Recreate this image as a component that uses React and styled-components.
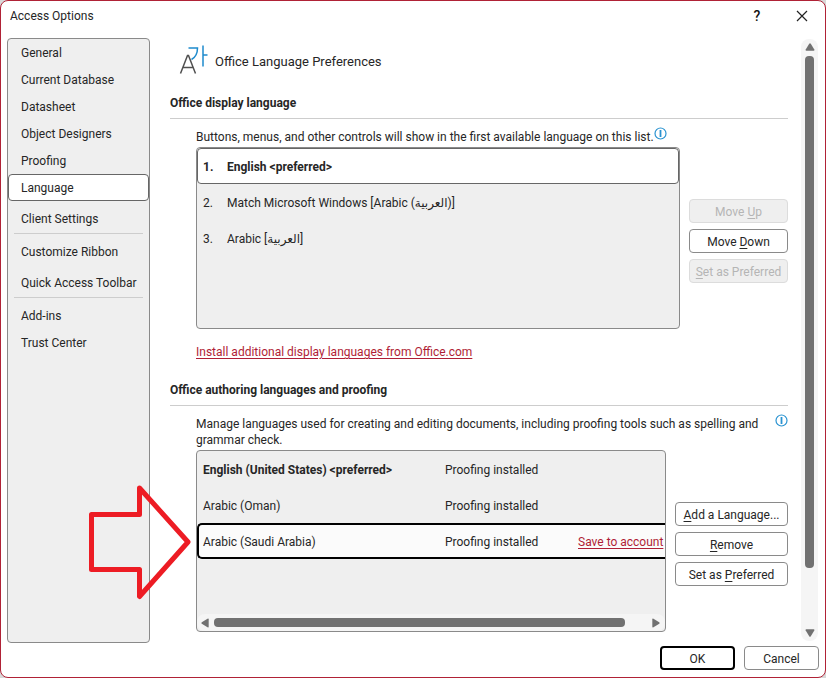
import React, { useState } from "react";

import styled, { createGlobalStyle, css } from "styled-components";

const GlobalStyle = createGlobalStyle`
  * {
    box-sizing: border-box;
  }
  body {
    margin: 0;
    background: #d8d8d8;
    color: #262626;
    font-family: Roboto, "DejaVu Sans", sans-serif;
    font-size: 12px;
    line-height: 16px;
  }
`;

const pages = [
  { name: "General" },
  { name: "Current Database" },
  { name: "Datasheet" },
  { name: "Object Designers" },
  { name: "Proofing" },
  { name: "Language" },
  { name: "Client Settings", spaced: true, divider: true },
  { name: "Customize Ribbon" },
  { name: "Quick Access Toolbar", spaced: true, divider: true },
  { name: "Add-ins" },
  { name: "Trust Center" },
];

const displayLanguages = [
  "English <preferred>",
  "Match Microsoft Windows [Arabic (العربية)]",
  "Arabic [العربية]",
];

const authoringLanguages = [
  { name: "English (United States) <preferred>", preferred: true },
  { name: "Arabic (Oman)" },
  { name: "Arabic (Saudi Arabia)", save: true },
];

const LanguageIcon = () => (
  <svg width='30' height='30' viewBox='0 0 30 30' fill='none' aria-hidden='true'>
    <path
      d='M1.5 28.5L8.5 10.5H9.5L16.5 28.5M4 22.5H14'
      stroke='#505050'
      strokeWidth='1.5'
    />
    <path
      d='M9.5 3H18.5C18.5 8 17 12 12.5 14.5M24 .5V21.5M24 10H28.5'
      stroke='#1e8bcd'
      strokeWidth='1.5'
    />
  </svg>
);

const InfoIcon = () => (
  <svg width='13' height='13' viewBox='0 0 13 13' fill='none'>
    <circle cx='6.5' cy='6.5' r='5.5' stroke='#2a93d1' strokeWidth='1.2' />
    <path d='M6.5 3V10' stroke='#2a93d1' strokeWidth='1.8' />
  </svg>
);

const Triangle = ({ turn = 0 }) => (
  <svg width='10' height='10' viewBox='0 0 10 10' aria-hidden='true'>
    <path
      d='M4.2 1.8L.7 7.5Q.2 8.7 1.4 8.7H8.6Q9.8 8.7 9.3 7.5L5.8 1.8Q5 .8 4.2 1.8Z'
      fill='#717171'
      transform={`rotate(${turn} 5 5)`}
    />
  </svg>
);

const App = () => {
  const [page, setPage] = useState("Language");
  const [display, setDisplay] = useState(0);
  const [authoring, setAuthoring] = useState(2);

  return (
    <>
      <GlobalStyle />
      <Dialog>
        <TitleBar>
          <Title>Access Options</Title>
          <TitleButton aria-label='Help'>?</TitleButton>
          <TitleButton aria-label='Close'>
            <svg width='12' height='12' viewBox='0 0 12 12' aria-hidden='true'>
              <path d='M1 1L11 11M11 1L1 11' stroke='#222' strokeWidth='1.2' />
            </svg>
          </TitleButton>
        </TitleBar>

        <Body>
          <Sidebar>
            {pages.map(p => (
              <React.Fragment key={p.name}>
                <NavButton
                  $active={p.name === page}
                  $spaced={p.spaced}
                  onClick={() => setPage(p.name)}
                >
                  {p.name}
                </NavButton>
                {p.divider && <Divider />}
              </React.Fragment>
            ))}
          </Sidebar>

          <Content>
            <PageHeader>
              <LanguageIcon />
              <PageTitle>Office Language Preferences</PageTitle>
            </PageHeader>

            <SectionTitle>Office display language</SectionTitle>
            <Section>
              <Hint>
                <HintText>
                  Buttons, menus, and other controls will show in the first
                  available language on this list.
                </HintText>
                <InfoButton aria-label='About display languages'>
                  <InfoIcon />
                </InfoButton>
              </Hint>
              <Columns>
                <DisplayList>
                  {displayLanguages.map((name, i) => (
                    <li key={name}>
                      <DisplayRow
                        $active={i === display}
                        $preferred={i === 0}
                        onClick={() => setDisplay(i)}
                      >
                        <span>{i + 1}.</span>
                        <span>{name}</span>
                      </DisplayRow>
                    </li>
                  ))}
                </DisplayList>
                <Actions $width='99px'>
                  <Button disabled>
                    Move <u>U</u>p
                  </Button>
                  <Button>
                    Move <u>D</u>own
                  </Button>
                  <Button disabled>
                    <u>S</u>et as Preferred
                  </Button>
                </Actions>
              </Columns>
              <InstallLink href='#install'>
                Install additional display languages from Office.com
              </InstallLink>
            </Section>

            <SectionTitle>Office authoring languages and proofing</SectionTitle>
            <Section>
              <Hint $spread>
                <HintText>
                  Manage languages used for creating and editing documents,
                  including proofing tools such as spelling and grammar check.
                </HintText>
                <InfoButton aria-label='About authoring languages'>
                  <InfoIcon />
                </InfoButton>
              </Hint>
              <Columns>
                <AuthoringBox>
                  <Table>
                    <tbody>
                      {authoringLanguages.map((lang, i) => (
                        <Row
                          key={lang.name}
                          $active={i === authoring}
                          onClick={() => setAuthoring(i)}
                        >
                          <Cell $width='242px' $bold={lang.preferred}>
                            {lang.name}
                          </Cell>
                          <Cell $width='133px'>Proofing installed</Cell>
                          <Cell $width='150px'>
                            {lang.save && <Link href='#save'>Save to account</Link>}
                          </Cell>
                        </Row>
                      ))}
                    </tbody>
                  </Table>
                  <HorizontalBar>
                    <Triangle turn={-90} />
                    <HorizontalThumb />
                    <Triangle turn={90} />
                  </HorizontalBar>
                </AuthoringBox>
                <Actions $width='113px'>
                  <Button>
                    <u>A</u>dd a Language...
                  </Button>
                  <Button>
                    <u>R</u>emove
                  </Button>
                  <Button>
                    Set as <u>P</u>referred
                  </Button>
                </Actions>
              </Columns>
            </Section>
          </Content>

          <VerticalBar>
            <Triangle />
            <VerticalThumb />
            <Triangle turn={180} />
          </VerticalBar>
        </Body>

        <Footer>
          <Button $primary>OK</Button>
          <Button>Cancel</Button>
        </Footer>

        <Pointer width='104' height='116' viewBox='0 0 104 116' aria-hidden='true'>
          <path
            d='M3.5 30.5H51.5V4L100 58L51.5 112.5V85.5H3.5Z'
            fill='none'
            stroke='#ed1c24'
            strokeWidth='5'
            strokeLinejoin='round'
          />
        </Pointer>
      </Dialog>
    </>
  );
};

export default App;

const Dialog = styled.div`
  position: relative;
  display: flex;
  flex-direction: column;
  min-height: 100vh;
  background: #fff;
  border: 1px solid #b02236;
  border-radius: 8px;
`;

const TitleBar = styled.header`
  display: flex;
  align-items: center;
  height: 37px;
  padding: 0 8px 8px 9px;
`;

const Title = styled.h1`
  flex: 1;
  margin: 0;
  font-size: 12px;
  font-weight: normal;
`;

const TitleButton = styled.button`
  display: flex;
  justify-content: center;
  align-items: center;
  width: 30px;
  height: 24px;
  padding: 0;
  margin-left: 15px;
  background: none;
  border: none;
  color: #111;
  font-family: inherit;
  font-size: 14px;
  font-weight: 500;
`;

const Body = styled.div`
  display: flex;
  flex: 1;
  padding: 0 7px 0 6px;
`;

const Sidebar = styled.nav`
  display: flex;
  flex-direction: column;
  flex: 0 0 143px;
  background: #efefef;
  border: 1px solid #8a8a8a;
  border-radius: 4px;
`;

const NavButton = styled.button`
  height: 27px;
  margin-top: ${({ $spaced }) => ($spaced ? "4px" : "0")};
  padding: 0 0 0 12px;
  background: ${({ $active }) => ($active ? "#fff" : "transparent")};
  border: 1px solid ${({ $active }) => ($active ? "#666" : "transparent")};
  border-radius: 4px;
  color: inherit;
  font: inherit;
  text-align: left;
  white-space: nowrap;
`;

const Divider = styled.hr`
  align-self: stretch;
  height: 1px;
  margin: 1px 6px 4px;
  background: #cdcdcd;
  border: none;
`;

const Content = styled.main`
  flex: 1;
  min-width: 0;
  padding: 7px 13px 10px 20px;
`;

const PageHeader = styled.div`
  display: flex;
  align-items: center;
  gap: 6px;
  padding-left: 9px;
`;

const PageTitle = styled.h2`
  margin: 0;
  padding-top: 3px;
  font-size: 13px;
  font-weight: normal;
`;

const SectionTitle = styled.h3`
  margin: 20px 0 0;
  padding-bottom: 7px;
  border-bottom: 1px solid #cdcdcd;
  font-size: 12px;
  font-weight: bold;
`;

const Section = styled.section`
  padding: 8px 0 0 26px;
`;

const Hint = styled.div`
  display: flex;
  justify-content: ${({ $spread }) => ($spread ? "space-between" : "flex-start")};
  align-items: flex-start;
  margin-bottom: 2px;
`;

const HintText = styled.p`
  margin: 2px 0 0;
`;

const InfoButton = styled.button`
  display: flex;
  padding: 0;
  background: none;
  border: none;
`;

const Columns = styled.div`
  display: flex;
  align-items: flex-end;
  gap: 9px;
`;

const listBox = css`
  flex: 1;
  min-width: 0;
  min-height: 182px;
  background: #efefef;
  border: 1px solid #8a8a8a;
  border-radius: 4px;
  overflow: hidden;
`;

const DisplayList = styled.ol`
  ${listBox}
  margin: 0;
  padding: 0;
  list-style: none;
`;

const DisplayRow = styled.button`
  display: grid;
  grid-template-columns: 24px 1fr;
  align-items: center;
  width: 100%;
  height: 36px;
  padding: 2px 5px 0;
  background: ${({ $active }) => ($active ? "#fff" : "transparent")};
  border: 1px solid ${({ $active }) => ($active ? "#666" : "transparent")};
  border-radius: 4px;
  color: inherit;
  font: inherit;
  font-weight: ${({ $preferred }) => ($preferred ? "bold" : "normal")};
  text-align: left;
`;

const Actions = styled.div`
  display: flex;
  flex-direction: column;
  flex: 0 0 ${({ $width }) => $width};
  gap: 6px;
  padding-bottom: 46px;
`;

const Button = styled.button`
  height: 24px;
  padding: 2px 0 0;
  background: #fff;
  border: ${({ $primary }) => ($primary ? "2px solid #000" : "1px solid #8a8a8a")};
  border-radius: 4px;
  color: inherit;
  font: inherit;
  white-space: nowrap;
  u {
    text-underline-offset: 2px;
  }
  &:disabled {
    background: #efefef;
    border-color: #dcdcdc;
    color: #b5b5b5;
  }
`;

const Link = styled.a`
  color: #b01e36;
  text-underline-offset: 2px;
`;

const InstallLink = styled(Link)`
  display: inline-block;
  margin: 15px 0 2px;
`;

const AuthoringBox = styled.div`
  ${listBox}
  display: flex;
  flex-direction: column;
  justify-content: space-between;
`;

const Table = styled.table`
  width: 525px;
  border-spacing: 0;
  table-layout: fixed;
`;

const Cell = styled.td`
  width: ${({ $width }) => $width};
  height: 36px;
  padding: 2px 6px 0;
  font-weight: ${({ $bold }) => ($bold ? "bold" : "normal")};
  white-space: nowrap;
`;

const Row = styled.tr`
  ${({ $active }) =>
    $active &&
    css`
      ${Cell} {
        background: #fbfbfb;
        border: solid #000;
        border-width: 2px 0;
      }
      ${Cell}:first-child {
        padding-left: 4px;
        border-left-width: 2px;
        border-radius: 5px 0 0 5px;
      }
    `}
`;

const HorizontalBar = styled.div`
  display: flex;
  align-items: center;
  gap: 4px;
  height: 17px;
  padding: 0 4px 0 3px;
  background: #f5f5f5;
  border-radius: 8px;
`;

const HorizontalThumb = styled.div`
  flex: 1;
  height: 9px;
  margin-right: 22px;
  background: #717171;
  border-radius: 4px;
`;

const VerticalBar = styled.div`
  display: flex;
  flex-direction: column;
  align-items: center;
  gap: 4px;
  width: 17px;
  margin: 1px 0 2px;
  padding: 3px 0;
  background: #f5f5f5;
  border-radius: 8px;
`;

const VerticalThumb = styled.div`
  flex: 1;
  width: 9px;
  margin-bottom: 56px;
  background: #717171;
  border-radius: 4px;
`;

const Footer = styled.footer`
  display: flex;
  justify-content: flex-end;
  gap: 9px;
  padding: 3px 6px 7px;
  ${Button} {
    width: 75px;
  }
`;

const Pointer = styled.svg`
  position: absolute;
  top: 483px;
  left: 87px;
  pointer-events: none;
`;
